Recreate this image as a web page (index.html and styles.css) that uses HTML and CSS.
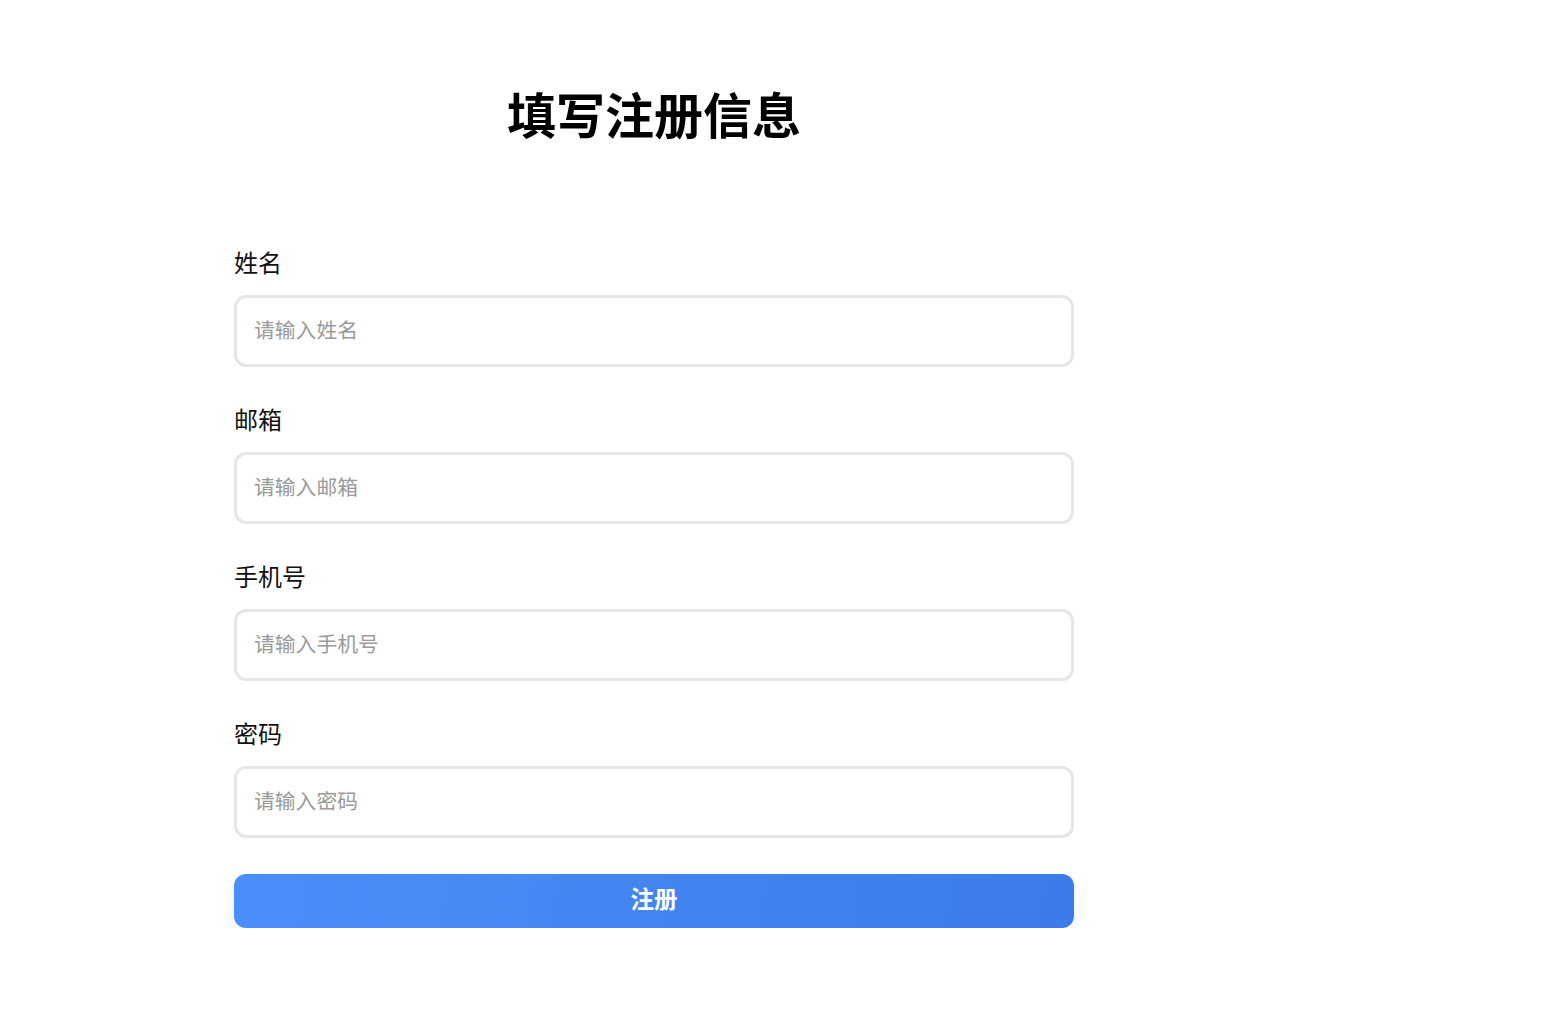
FILE: index.html
```html
<!DOCTYPE html>
<html lang="zh-CN">
<head>
<meta charset="utf-8">
<title>填写注册信息</title>
<link rel="stylesheet" href="styles.css">
</head>
<body>
<div class="page">
  <h1 class="title">填写注册信息</h1>
  <form class="form">
    <div class="field">
      <label class="label">姓名</label>
      <input class="input" type="text" placeholder="请输入姓名">
    </div>
    <div class="field">
      <label class="label">邮箱</label>
      <input class="input" type="text" placeholder="请输入邮箱">
    </div>
    <div class="field">
      <label class="label">手机号</label>
      <input class="input" type="text" placeholder="请输入手机号">
    </div>
    <div class="field">
      <label class="label">密码</label>
      <input class="input" type="password" placeholder="请输入密码">
    </div>
    <button class="submit" type="button">注册</button>
  </form>
</div>
</body>
</html>
```
FILE: styles.css
```css
html, body {
  margin: 0;
  padding: 0;
  background: #ffffff;
}
body {
  font-family: "Noto Sans CJK SC", "Noto Sans", sans-serif;
  color: #111;
}
.page {
  width: 840px;
  margin-left: 234px;
  padding-top: 77px;
}
.title {
  margin: 0;
  font-size: 49px;
  line-height: 72px;
  font-weight: 700;
  text-align: center;
  color: #000;
}
.form {
  display: flex;
  flex-direction: column;
  margin-top: 95px;
}
.field {
  display: flex;
  flex-direction: column;
  gap: 15px;
  margin-bottom: 34px;
}
.label {
  font-size: 24px;
  line-height: 36px;
  color: #111;
}
.input {
  box-sizing: border-box;
  height: 72px;
  width: 100%;
  border: 3px solid #e6e6e6;
  border-radius: 12px;
  padding: 0 17px 4px;
  font-family: inherit;
  font-size: 20.8px;
  color: #333;
  outline: none;
  background: #fff;
}
.input::placeholder {
  color: #9a9a9a;
}
.submit {
  margin-top: 2px;
  height: 54px;
  width: 100%;
  border: none;
  border-radius: 12px;
  padding: 0 0 6px;
  background: linear-gradient(100deg, #4a8ff9 0%, #3b7ce8 100%);
  color: #fff;
  font-family: inherit;
  font-size: 23.5px;
  font-weight: 700;
  box-shadow: 0 6px 16px rgba(60, 120, 230, 0.12);
  cursor: pointer;
}
```
